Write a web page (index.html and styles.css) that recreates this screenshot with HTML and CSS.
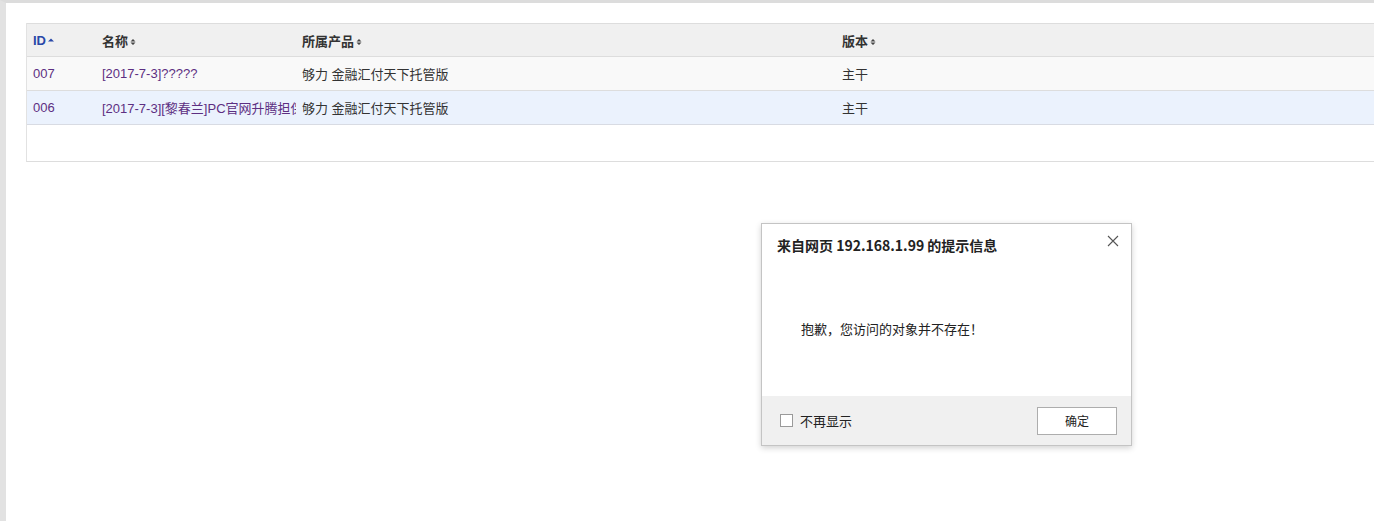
FILE: index.html
```html
<!DOCTYPE html>
<html lang="zh-CN">
<head>
    <meta charset="UTF-8">
    <title>版本列表</title>
    <link rel="stylesheet" href="styles.css">
</head>
<body>
<div class="frame">
    <div class="listbox">
        <table class="datalist">
            <colgroup>
                <col class="c-id">
                <col class="c-name">
                <col class="c-product">
                <col>
            </colgroup>
            <thead>
            <tr>
                <th class="sorted">ID<svg class="sort" width="6" height="8" viewBox="0 0 6 8"><path d="M0 4.5 L3 1.5 L6 4.5 Z"/></svg></th>
                <th>名称<svg class="sort" width="6" height="8" viewBox="0 0 6 8"><path d="M0.5 3.5 L3 1 L5.5 3.5 Z M0.5 4.5 L3 7 L5.5 4.5 Z"/></svg></th>
                <th>所属产品<svg class="sort" width="6" height="8" viewBox="0 0 6 8"><path d="M0.5 3.5 L3 1 L5.5 3.5 Z M0.5 4.5 L3 7 L5.5 4.5 Z"/></svg></th>
                <th>版本<svg class="sort" width="6" height="8" viewBox="0 0 6 8"><path d="M0.5 3.5 L3 1 L5.5 3.5 Z M0.5 4.5 L3 7 L5.5 4.5 Z"/></svg></th>
            </tr>
            </thead>
            <tbody>
            <tr class="odd">
                <td><a class="visited">007</a></td>
                <td class="clip"><a class="visited">[2017-7-3]?????</a></td>
                <td>够力 金融汇付天下托管版</td>
                <td>主干</td>
            </tr>
            <tr class="hover">
                <td><a class="visited">006</a></td>
                <td class="clip"><a class="visited">[2017-7-3][黎春兰]PC官网升腾担保平台改版</a></td>
                <td>够力 金融汇付天下托管版</td>
                <td>主干</td>
            </tr>
            </tbody>
        </table>
    </div>
</div>

<div class="dialog">
    <div class="dialog-title">来自网页 192.168.1.99 的提示信息</div>
    <svg class="dialog-close" width="12" height="12" viewBox="0 0 12 12"><path d="M1 1 L11 11 M11 1 L1 11" stroke="#555" stroke-width="1.1" fill="none"/></svg>
    <div class="dialog-body">抱歉，您访问的对象并不存在！</div>
    <div class="dialog-foot">
        <label class="nomore"><span class="box"></span>不再显示</label>
        <button class="ok">确定</button>
    </div>
</div>
</body>
</html>
```

FILE: styles.css
```css
html, body {
    margin: 0;
    height: 100%;
    overflow: hidden;
}

body {
    background: #fff;
    font-family: "Liberation Sans", Arial, "Noto Sans CJK SC", sans-serif;
    font-size: 13px;
    color: #333;
}

.frame {
    height: 100%;
    box-sizing: border-box;
    border-top: 3px solid #dcdcdc;
    border-left: 6px solid #e2e2e2;
    padding: 20px 0 0 20px;
}

.listbox {
    margin-right: -10px;
    height: 138px;
    border-left: 1px solid #e2e2e2;
    border-bottom: 1px solid #dddddd;
}

.datalist {
    width: 100%;
    border-collapse: collapse;
    table-layout: fixed;
}

.c-id { width: 69px; }
.c-name { width: 200px; }
.c-product { width: 540px; }

.datalist th,
.datalist td {
    height: 33px;
    padding: 0 6px;
    text-align: left;
    white-space: nowrap;
    border-bottom: 1px solid #dddddd;
    font-family: "Liberation Sans", Arial, "Noto Sans CJK SC", sans-serif;
    font-size: 13px;
}

.datalist thead th {
    height: 32px;
    background: #f0f0f0;
    border-top: 1px solid #dddddd;
    font-weight: bold;
    color: #333;
}

.datalist th.sorted {
    color: #2948a8;
}

.sort {
    margin-left: 2px;
    vertical-align: 0;
    fill: #444;
}

.sorted .sort {
    fill: #2948a8;
}

.datalist td.clip {
    overflow: hidden;
    padding-right: 0;
}

.datalist tr.odd td {
    background: #f9f9f9;
}

.datalist tr.hover td {
    background: #ebf2fd;
    border-top: 1px solid #dcdce6;
    border-bottom-color: #d8dbe3;
}

a.visited {
    color: #5d2f82;
    text-decoration: none;
}

.dialog {
    position: absolute;
    left: 761px;
    top: 223px;
    width: 369px;
    height: 221px;
    background: #fff;
    border: 1px solid #c4c4c4;
    box-shadow: 0 2px 6px rgba(0, 0, 0, 0.18);
    font-family: "Noto Sans CJK SC", sans-serif;
    color: #222;
}

.dialog-title {
    padding: 11px 0 0 15px;
    font-size: 14px;
    font-weight: bold;
    height: 32px;
}

.dialog-close {
    position: absolute;
    right: 12px;
    top: 11px;
}

.dialog-body {
    height: 129px;
    box-sizing: border-box;
    padding: 52px 0 0 39px;
    font-size: 13px;
}

.dialog-foot {
    display: flex;
    align-items: center;
    justify-content: space-between;
    height: 49px;
    background: #f0f0f0;
    padding: 0 14px 0 18px;
    font-size: 13px;
}

.nomore {
    display: flex;
    align-items: center;
}

.box {
    width: 11px;
    height: 11px;
    border: 1px solid #9a9a9a;
    background: #fff;
    margin-right: 7px;
}

.ok {
    width: 80px;
    height: 28px;
    background: #fff;
    border: 1px solid #adadad;
    font-family: "Noto Sans CJK SC", sans-serif;
    font-size: 12px;
    color: #222;
    padding: 0;
}
```
